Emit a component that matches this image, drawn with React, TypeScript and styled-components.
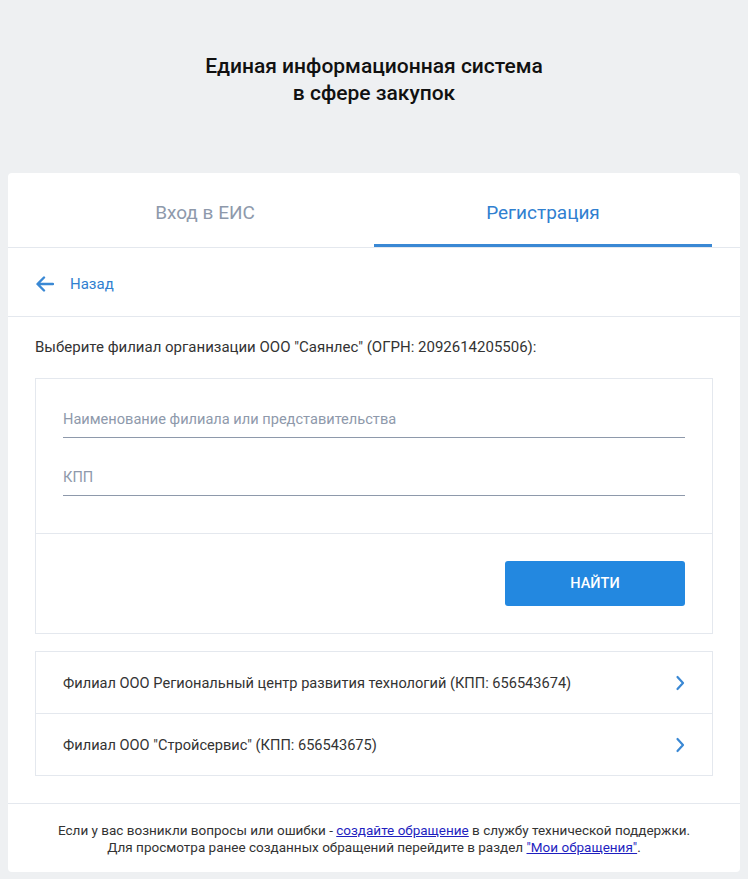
import React from "react";
import styled, { createGlobalStyle } from "styled-components";

const GlobalStyle = createGlobalStyle`
  html, body {
    margin: 0;
    padding: 0;
    background: #eef0f2;
    font-family: Roboto, "Liberation Sans", sans-serif;
    color: #333;
  }
`;

const Page = styled.div`
  min-height: 879px;
  padding: 0 8px 9px;
  box-sizing: border-box;
`;

const Header = styled.header`
  height: 173px;
  padding-top: 53px;
  box-sizing: border-box;
  text-align: center;
`;

const Title = styled.h1`
  margin: 0;
  font-size: 21px;
  font-weight: 500;
  line-height: 27px;
  color: #111;
`;

const Card = styled.main`
  background: #fff;
  border-radius: 4px;
`;

const Tabs = styled.nav`
  display: flex;
  padding: 0 28px;
  height: 74px;
  border-bottom: 1px solid #e4e8ee;
`;

const Tab = styled.div<{ $active?: boolean }>`
  flex: 1;
  display: flex;
  align-items: center;
  justify-content: center;
  font-size: 19px;
  color: ${(p) => (p.$active ? "#3080d0" : "#8e99ab")};
  border-bottom: 3px solid ${(p) => (p.$active ? "#3a88d4" : "transparent")};
  padding-top: 7px;
  box-sizing: border-box;
`;

const BackRow = styled.div`
  display: flex;
  align-items: center;
  gap: 16px;
  height: 69px;
  padding: 4px 28px 0;
  box-sizing: border-box;
  border-bottom: 1px solid #e4e8ee;
  color: #3080d0;
  font-size: 15px;
`;

const Body = styled.section`
  padding: 21px 27px 27px;
  border-bottom: 1px solid #e4e8ee;
`;

const Lead = styled.p`
  margin: 0 0 22px;
  font-size: 15px;
  line-height: 18px;
  color: #333;
`;

const SearchBox = styled.div`
  border: 1px solid #e4e8ee;
`;

const Fields = styled.div`
  display: flex;
  flex-direction: column;
  gap: 20px;
  padding: 21px 27px 37px;
  border-bottom: 1px solid #e4e8ee;
`;

const Field = styled.div`
  height: 37px;
  display: flex;
  align-items: center;
  border-bottom: 1px solid #8e99ab;
  font-size: 14.6px;
  color: #8e99ab;
`;

const Actions = styled.div`
  display: flex;
  justify-content: flex-end;
  padding: 27px;
`;

const Button = styled.button`
  width: 180px;
  height: 45px;
  border: none;
  border-radius: 3px;
  background: #2388e0;
  color: #fff;
  font-family: inherit;
  font-size: 14.5px;
  font-weight: 500;
`;

const List = styled.ul`
  list-style: none;
  margin: 17px 0 0;
  padding: 0;
  border: 1px solid #e4e8ee;
`;

const Item = styled.li`
  display: flex;
  align-items: center;
  justify-content: space-between;
  height: 61px;
  padding: 0 27px;
  font-size: 14.6px;
  color: #333;
  & + & {
    border-top: 1px solid #e4e8ee;
  }
`;

const Footer = styled.footer`
  padding: 18px 20px 16px;
  text-align: center;
  font-size: 13.5px;
  line-height: 17px;
  color: #333;
  & a {
    color: #1f1fbf;
  }
`;

const ArrowLeft = () => (
  <svg width="18" height="16" viewBox="0 0 18 16" fill="none">
    <path d="M17 8H2M8 1.5L1.5 8L8 14.5" stroke="#3a88d4" strokeWidth="2.4" strokeLinecap="round" strokeLinejoin="round" />
  </svg>
);

const Chevron = () => (
  <svg width="10" height="16" viewBox="0 0 10 16" fill="none">
    <path d="M2.5 2L8 8L2.5 14" stroke="#3a88d4" strokeWidth="2.2" strokeLinecap="round" strokeLinejoin="round" />
  </svg>
);

const branches = [
  "Филиал ООО Региональный центр развития технологий (КПП: 656543674)",
  'Филиал ООО "Стройсервис" (КПП: 656543675)',
];

const App: React.FC = () => (
  <Page>
    <GlobalStyle />
    <Header>
      <Title>
        Единая информационная система
        <br />в сфере закупок
      </Title>
    </Header>
    <Card>
      <Tabs>
        <Tab>Вход в ЕИС</Tab>
        <Tab $active>Регистрация</Tab>
      </Tabs>
      <BackRow>
        <ArrowLeft />
        <span>Назад</span>
      </BackRow>
      <Body>
        <Lead>Выберите филиал организации ООО "Саянлес" (ОГРН: 2092614205506):</Lead>
        <SearchBox>
          <Fields>
            <Field>Наименование филиала или представительства</Field>
            <Field>КПП</Field>
          </Fields>
          <Actions>
            <Button>НАЙТИ</Button>
          </Actions>
        </SearchBox>
        <List>
          {branches.map((b) => (
            <Item key={b}>
              <span>{b}</span>
              <Chevron />
            </Item>
          ))}
        </List>
      </Body>
      <Footer>
        Если у вас возникли вопросы или ошибки - <a href="#">создайте обращение</a> в службу технической поддержки.
        <br />
        Для просмотра ранее созданных обращений перейдите в раздел <a href="#">"Мои обращения"</a>.
      </Footer>
    </Card>
  </Page>
);

export default App;
